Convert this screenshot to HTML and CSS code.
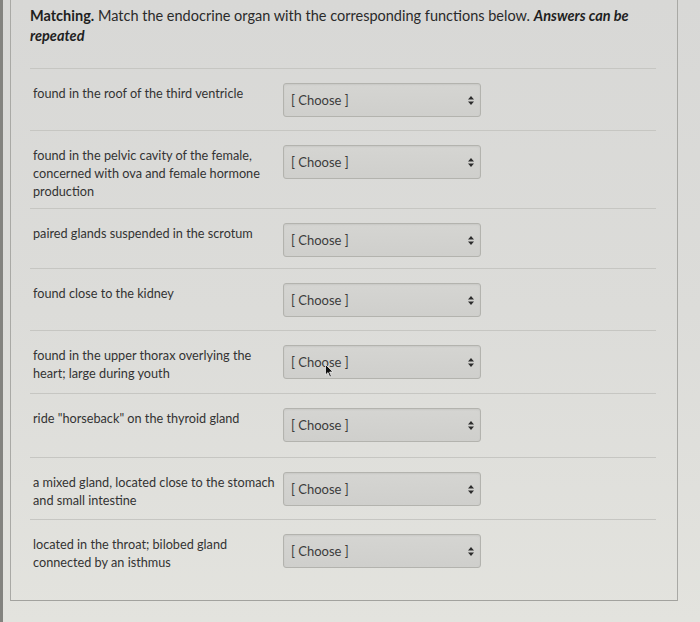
FILE: index.html
```html
<!DOCTYPE html>
<html lang="en">
<head>
<meta charset="utf-8">
<title>Matching</title>
<link rel="stylesheet" href="styles.css">
</head>
<body>
<div class="page">
  <div class="panel">
    <p class="prompt"><b>Matching.</b> Match the endocrine organ with the corresponding functions below. <b class="emph">Answers can be</b> <b class="emph">repeated</b></p>

    <div class="row">
      <div class="desc">found in the roof of the third ventricle</div>
      <div class="select"><span>[ Choose ]</span><svg class="arrows" width="6" height="9" viewBox="0 0 6 9"><path d="M3 0 L6 3.5 L0 3.5 Z M0 5.5 L6 5.5 L3 9 Z"/></svg></div>
    </div>

    <div class="row">
      <div class="desc">found in the pelvic cavity of the female, concerned with ova and female hormone production</div>
      <div class="select"><span>[ Choose ]</span><svg class="arrows" width="6" height="9" viewBox="0 0 6 9"><path d="M3 0 L6 3.5 L0 3.5 Z M0 5.5 L6 5.5 L3 9 Z"/></svg></div>
    </div>

    <div class="row">
      <div class="desc">paired glands suspended in the scrotum</div>
      <div class="select"><span>[ Choose ]</span><svg class="arrows" width="6" height="9" viewBox="0 0 6 9"><path d="M3 0 L6 3.5 L0 3.5 Z M0 5.5 L6 5.5 L3 9 Z"/></svg></div>
    </div>

    <div class="row">
      <div class="desc">found close to the kidney</div>
      <div class="select"><span>[ Choose ]</span><svg class="arrows" width="6" height="9" viewBox="0 0 6 9"><path d="M3 0 L6 3.5 L0 3.5 Z M0 5.5 L6 5.5 L3 9 Z"/></svg></div>
    </div>

    <div class="row">
      <div class="desc">found in the upper thorax overlying the heart; large during youth</div>
      <div class="select"><span>[ Choose ]</span><svg class="arrows" width="6" height="9" viewBox="0 0 6 9"><path d="M3 0 L6 3.5 L0 3.5 Z M0 5.5 L6 5.5 L3 9 Z"/></svg>
        <svg class="cursor" width="9" height="14" viewBox="0 0 9 14"><path d="M0.5 0.5 L0.5 11 L3 8.6 L4.8 13 L6.4 12.3 L4.6 8 L8 8 Z" fill="#111" stroke="#eee" stroke-width="0.8"/></svg>
      </div>
    </div>

    <div class="row">
      <div class="desc">ride "horseback" on the thyroid gland</div>
      <div class="select"><span>[ Choose ]</span><svg class="arrows" width="6" height="9" viewBox="0 0 6 9"><path d="M3 0 L6 3.5 L0 3.5 Z M0 5.5 L6 5.5 L3 9 Z"/></svg></div>
    </div>

    <div class="row">
      <div class="desc">a mixed gland, located close to the stomach and small intestine</div>
      <div class="select"><span>[ Choose ]</span><svg class="arrows" width="6" height="9" viewBox="0 0 6 9"><path d="M3 0 L6 3.5 L0 3.5 Z M0 5.5 L6 5.5 L3 9 Z"/></svg></div>
    </div>

    <div class="row">
      <div class="desc">located in the throat; bilobed gland connected by an isthmus</div>
      <div class="select"><span>[ Choose ]</span><svg class="arrows" width="6" height="9" viewBox="0 0 6 9"><path d="M3 0 L6 3.5 L0 3.5 Z M0 5.5 L6 5.5 L3 9 Z"/></svg></div>
    </div>
  </div>
</div>
</body>
</html>
```

FILE: styles.css
```css
html, body {
  margin: 0;
  padding: 0;
}

body {
  width: 700px;
  height: 622px;
  overflow: hidden;
  background: linear-gradient(180deg, #d8d8d6 0%, #dcdcd9 50%, #e3e3de 100%);
  font-family: Lato, "Open Sans", "Liberation Sans", sans-serif;
  color: #2e2e2e;
}

.page {
  border-left: 3px solid #83837f;
  padding-left: 7px;
  height: 622px;
  box-sizing: border-box;
}

.panel {
  width: 668px;
  box-sizing: border-box;
  border-left: 1px solid #a9a9a5;
  border-right: 1px solid #a9a9a5;
  border-bottom: 1px solid #a2a29e;
  padding: 6px 21px 19px 19px;
}

.prompt {
  margin: 0 0 22px;
  font-size: 14.5px;
  line-height: 20px;
  color: #2a2a2a;
}

.prompt b {
  font-weight: 700;
  color: #1f1f1f;
}

.prompt .emph {
  font-style: italic;
}

.row {
  display: flex;
  align-items: flex-start;
  border-top: 1px solid #c6c6c2;
  padding: 14px 0 9px;
}

.row:nth-child(3) {
  padding-bottom: 8px;
}

.row:nth-child(4) {
  padding-bottom: 7px;
}

.row:nth-child(6) {
  padding-bottom: 10px;
}

.row:nth-child(7) {
  padding-bottom: 11px;
}

.desc {
  width: 253px;
  box-sizing: border-box;
  padding-left: 3px;
  padding-top: 1px;
  font-size: 12.7px;
  line-height: 18px;
  color: #333;
}

.select {
  position: relative;
  width: 198px;
  height: 34px;
  box-sizing: border-box;
  margin-bottom: 4px;
  display: flex;
  align-items: center;
  justify-content: space-between;
  padding: 0 7px 0 7px;
  border: 1px solid #b3b3ae;
  border-radius: 3px;
  background: linear-gradient(180deg, #d5d5d2 0%, #cfcfcc 100%);
  box-shadow: inset 0 1px 2px rgba(0, 0, 0, 0.06);
  font-size: 13px;
  color: #3c3c3c;
}

.arrows {
  fill: #2c2c2c;
  margin-right: -1px;
}

.cursor {
  position: absolute;
  left: 41px;
  top: 18px;
}
```
